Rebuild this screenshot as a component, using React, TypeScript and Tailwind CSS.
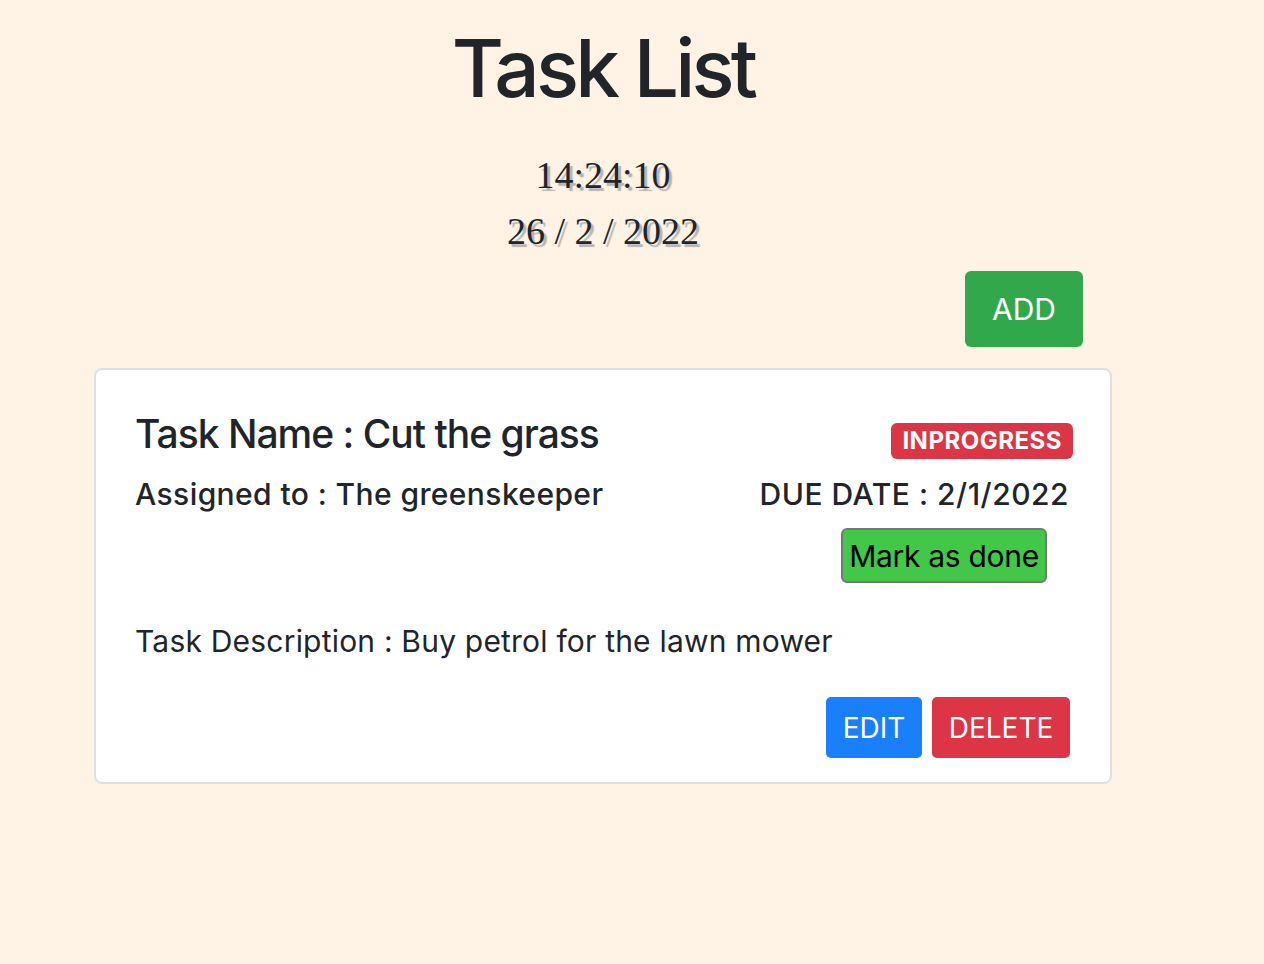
import React from "react";

export default function App() {
  return (
    <div className="min-h-[964px] w-full bg-[#fff3e5] font-['Inter','Noto_Sans',sans-serif] text-[#212529]">
      <div className="w-[1206px] flex flex-col items-center">
        <h1 className="mt-[20px] text-[80px] leading-[96px] font-medium tracking-[-3.8px]">Task List</h1>
        <div className="mt-[31px] flex flex-col items-center font-['Liberation_Serif','Times_New_Roman',serif] text-[38px] leading-[56px] text-[#212529] [text-shadow:3px_3px_1px_#b4b4b4]">
          <div>14:24:10</div>
          <div>26 / 2 / 2022</div>
        </div>
        <div className="w-full flex justify-end pr-[123px] mt-[12px]">
          <button className="w-[118px] h-[76px] rounded-[6px] bg-[#32a84c] text-white text-[30px] leading-none">ADD</button>
        </div>
        <div className="mt-[21px] w-[1018px] bg-white border-2 border-[#e0e0e0] rounded-[8px] pt-[40px] pb-[24px] pl-[39px] pr-[39px]">
          <div className="flex justify-between items-start">
            <h3 className="text-[39px] leading-[48px] font-medium tracking-[-1px]">Task Name : Cut the grass</h3>
            <span className="-mr-[2px] mt-[13px] h-[36px] px-[11px] flex items-center rounded-[6px] bg-[#dc3545] text-white text-[24px] font-bold tracking-[0.5px]">INPROGRESS</span>
          </div>
          <div className="mt-[17px] flex justify-between items-start text-[30px] leading-[36px] font-medium">
            <div className="tracking-[0.4px]">Assigned to : The greenskeeper</div>
            <div className="mr-[2px] tracking-[0.5px]">DUE DATE : 2/1/2022</div>
          </div>
          <div className="mt-[16px] flex justify-end">
            <button className="mr-[24px] w-[206px] h-[55px] rounded-[6px] bg-[#42c748] border-2 border-[#777777] text-black text-[30px] leading-none whitespace-nowrap tracking-[-0.3px]">Mark as done</button>
          </div>
          <p className="mt-[40px] text-[30px] leading-[36px] tracking-[0.2px]">Task Description : Buy petrol for the lawn mower</p>
          <div className="mt-[38px] flex justify-end gap-[10px] pr-[1px]">
            <button className="w-[96px] h-[61px] rounded-[5px] bg-[#1a7ffa] text-white text-[28px] leading-none">EDIT</button>
            <button className="w-[138px] h-[61px] rounded-[5px] bg-[#dc3545] text-white text-[28px] leading-none">DELETE</button>
          </div>
        </div>
      </div>
    </div>
  );
}
